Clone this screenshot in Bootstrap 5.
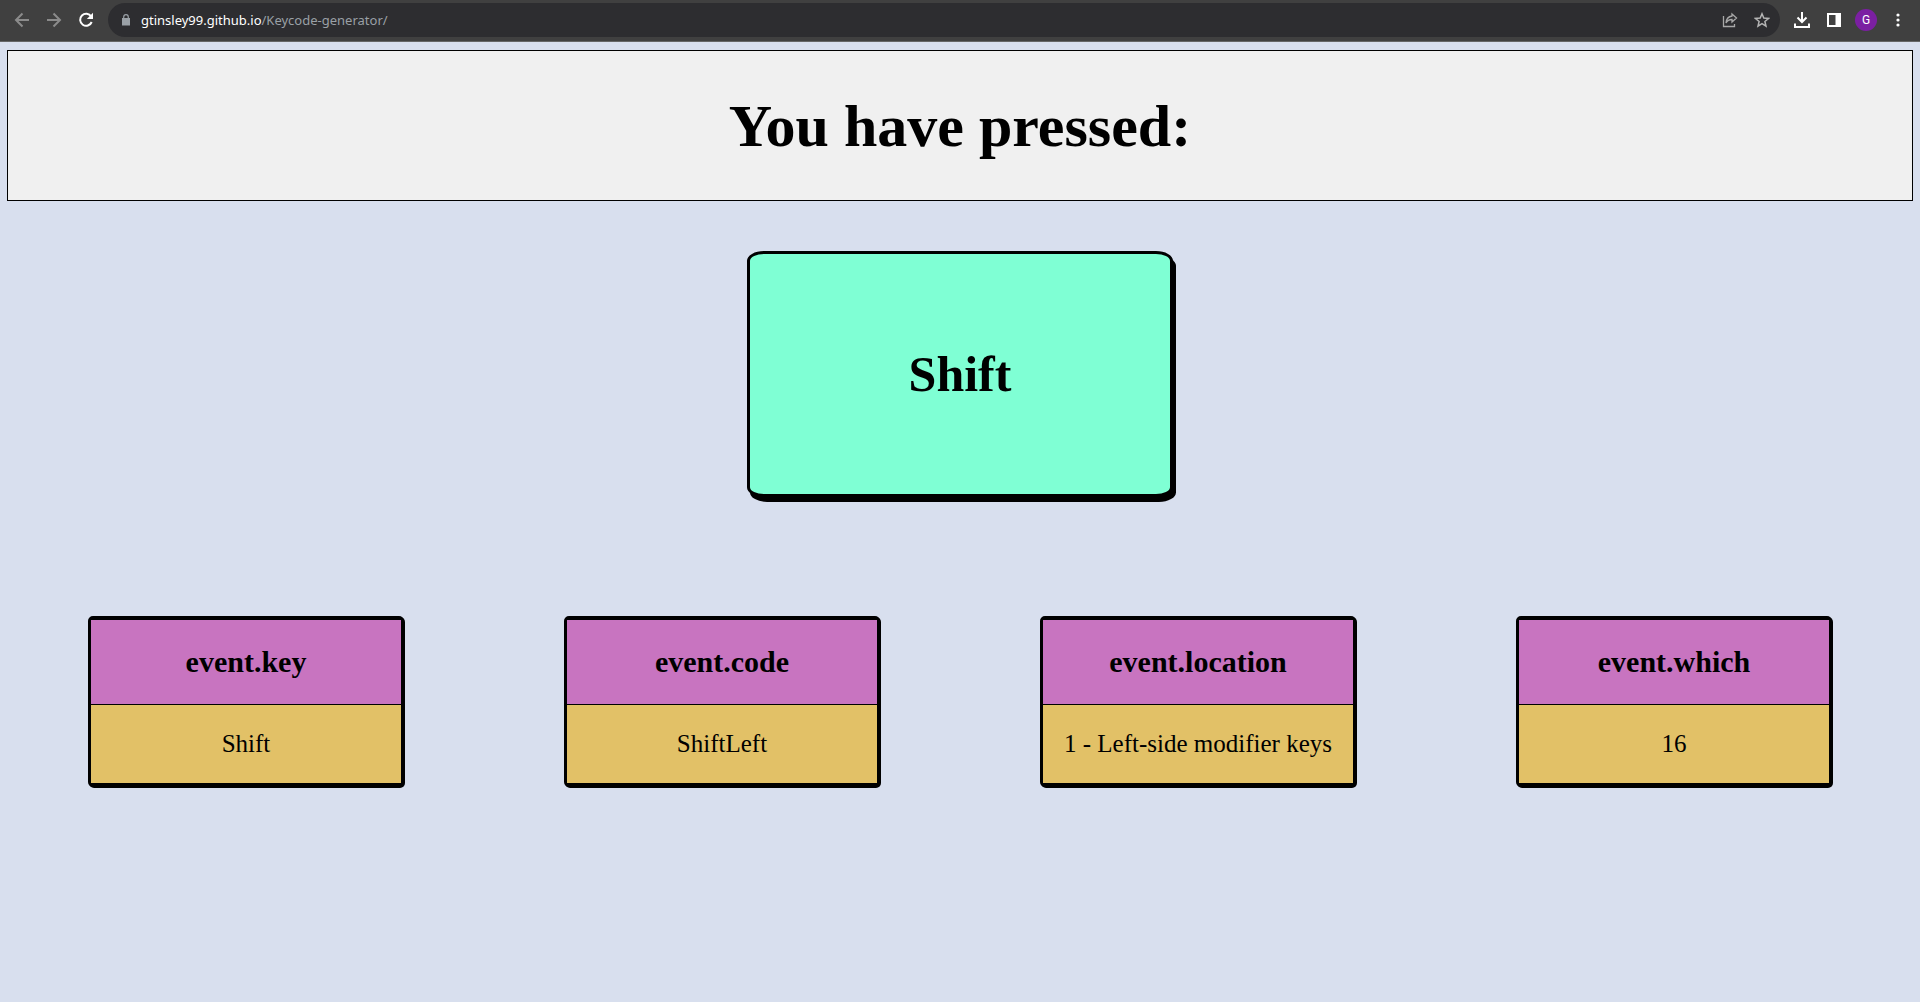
<!DOCTYPE html>
<html lang="en">
<head>
<meta charset="utf-8">
<meta name="viewport" content="width=device-width, initial-scale=1">
<title>Keycode generator</title>
<link rel="stylesheet" href="https://cdn.jsdelivr.net/npm/bootstrap@5.3.0/dist/css/bootstrap.min.css">
<style>
  body { background: #d8dfee; color: #000; font-family: "Liberation Serif", "Times New Roman", serif; }
  .toolbar { background: #404040; border-bottom: 1px solid #656667; padding: 3px 6px 4px 6px; font-family: "Noto Sans", sans-serif; }
  .tool { width: 32px; height: 32px; padding: 0; border: 0; background: none; color: #fff; }
  .tool.dim { color: #8b8b8b; }
  .tool.soft { color: #a8a8a8; }
  .tool svg, .omnibox svg { display: block; margin: auto; }
  .omnibox { height: 34px; margin: 0 6px; border-radius: 17px; background: #2d2d30; padding: 0 2px 0 13px; color: #9aa0a6; }
  .address { font-size: 13px; line-height: 20px; padding-left: 10px; color: #9aa0a6; }
  .address .host { color: #fff; }
  .avatar { width: 22px; height: 22px; border-radius: 50%; background: #7b1fa2; color: #fff; font-size: 12px; line-height: 22px; font-family: Roboto, sans-serif; }
  main { padding: 8px 7px; }
  .banner { height: 151px; background: #f0f0f0; border: 1px solid #000; }
  .banner h1 { font-size: 60px; font-weight: 700; line-height: 58px; }
  .keycap { width: 426px; height: 246px; margin-top: 50px; background: #7fffd4; border: 3px solid #000; border-radius: 4%; box-shadow: 3px 5px 0 #000; font-size: 50px; font-weight: 700; }
  .events { margin-top: 119px; padding: 0 1px; }
  .info { width: 316px; border: solid #000; border-width: 4px 3px; border-radius: 5px; box-shadow: 1px 1px 0 #000; background: #000; text-align: center; }
  .info h2 { font-size: 30px; line-height: 34px; font-weight: 700; padding: 25px 0; background: #c874c0; border-bottom: 1px solid #000; }
  .info p { font-size: 25px; line-height: 28px; padding: 25px 0; background: #e2c167; }
</style>
</head>
<body>
<header class="toolbar d-flex align-items-center">
  <button class="tool dim" aria-label="Back"><svg width="16" height="16" viewBox="0 0 16 16" fill="none" stroke="currentColor" stroke-width="2"><path d="M15 8H2.500M8.500 1.500 2 8l6.500 6.500"/></svg></button>
  <button class="tool dim" aria-label="Forward"><svg width="16" height="16" viewBox="0 0 16 16" fill="none" stroke="currentColor" stroke-width="2"><path d="M1 8h12.500M7.500 1.500 14 8l-6.500 6.500"/></svg></button>
  <button class="tool" aria-label="Reload"><svg width="16" height="16" viewBox="0 0 16 16"><path d="M13.200 4.500A6 6 0 1 0 13.700 10" fill="none" stroke="currentColor" stroke-width="2"/><path d="M15 .8V7H8.800z" fill="currentColor"/></svg></button>
  <div class="omnibox d-flex align-items-center flex-grow-1">
    <svg class="flex-shrink-0 m-0" width="10" height="12" viewBox="0 0 10 12"><path d="M1 4h8v7.500H1z" fill="currentColor"/><path d="M2.700 5V3a2.300 2.300 0 0 1 4.600 0v2" fill="none" stroke="currentColor" stroke-width="1.200"/></svg>
    <a href="#" class="address text-decoration-none flex-grow-1"><span class="host">gtinsley99.github.io</span>/Keycode-generator/</a>
    <button class="tool soft" aria-label="Share"><svg width="16" height="16" viewBox="0 0 16 16" fill="none" stroke="currentColor" stroke-width="1.300"><path d="M1.500 4v10.500h11V12"/><path d="M10 2l4.500 4L10 10V7.500C7 7.500 5.300 8.500 4 11c.3-4 2.500-6.500 6-7z"/></svg></button>
    <button class="tool soft" aria-label="Bookmark"><svg width="16" height="16" viewBox="0 0 16 16" fill="none" stroke="#b4b4b4" stroke-width="1.500"><path d="m8 1.800 1.800 4.300 4.700.4-3.600 3 1.100 4.600L8 11.700l-4 2.400 1.100-4.600-3.600-3 4.700-.4z"/></svg></button>
  </div>
  <button class="tool" aria-label="Downloads"><svg width="16" height="16" viewBox="0 0 16 16" fill="none" stroke="currentColor" stroke-width="2"><path d="M8 0v9.500M3.500 5.500 8 10l4.500-4.500M1 11.500V15h14v-3.500"/></svg></button>
  <button class="tool" aria-label="Side panel"><svg width="14" height="14" viewBox="0 0 14 14"><path d="M0 0h14v14H0zM2 2v10h6.500V2z" fill="currentColor" fill-rule="evenodd"/></svg></button>
  <button class="tool" aria-label="Profile"><span class="avatar d-block mx-auto">G</span></button>
  <button class="tool" aria-label="Menu"><svg width="4" height="14" viewBox="0 0 4 14" fill="currentColor"><circle cx="2" cy="2" r="1.600"/><circle cx="2" cy="7" r="1.600"/><circle cx="2" cy="12" r="1.600"/></svg></button>
</header>
<main>
  <section class="banner d-flex align-items-center justify-content-center"><h1 class="m-0">You have pressed:</h1></section>
  <div class="keycap d-flex align-items-center justify-content-center mx-auto">Shift</div>
  <section class="events">
    <div class="row row-cols-4 g-0">
      <div class="col"><article class="info mx-auto"><h2 class="m-0">event.key</h2><p class="m-0">Shift</p></article></div>
      <div class="col"><article class="info mx-auto"><h2 class="m-0">event.code</h2><p class="m-0">ShiftLeft</p></article></div>
      <div class="col"><article class="info mx-auto"><h2 class="m-0">event.location</h2><p class="m-0">1 - Left-side modifier keys</p></article></div>
      <div class="col"><article class="info mx-auto"><h2 class="m-0">event.which</h2><p class="m-0">16</p></article></div>
    </div>
  </section>
</main>
<script src="https://cdn.jsdelivr.net/npm/bootstrap@5.3.0/dist/js/bootstrap.bundle.min.js"></script>
</body>
</html>
